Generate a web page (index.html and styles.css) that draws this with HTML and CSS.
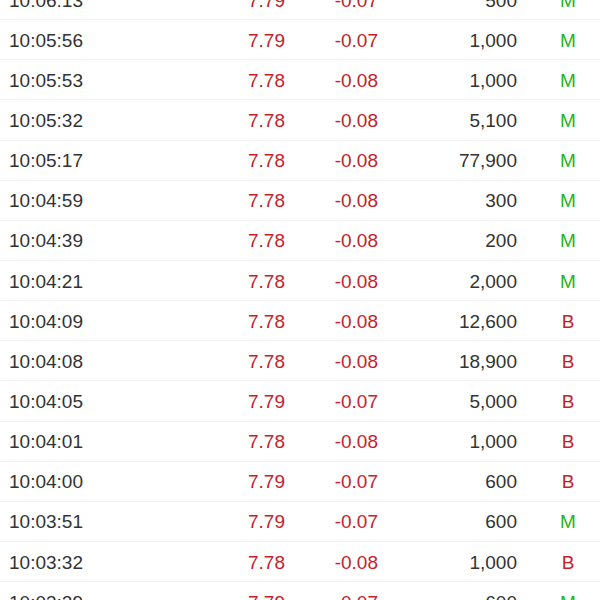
FILE: index.html
```html
<!DOCTYPE html>
<html lang="zh">
<head>
<meta charset="utf-8">
<link rel="stylesheet" href="styles.css">
</head>
<body>
<div class="list">
  <div class="row"><span class="time">10:06:13</span><span class="down">7.79</span><span class="down">-0.07</span><span class="vol">500</span><span class="flag m">M</span></div>
  <div class="row"><span class="time">10:05:56</span><span class="down">7.79</span><span class="down">-0.07</span><span class="vol">1,000</span><span class="flag m">M</span></div>
  <div class="row"><span class="time">10:05:53</span><span class="down">7.78</span><span class="down">-0.08</span><span class="vol">1,000</span><span class="flag m">M</span></div>
  <div class="row"><span class="time">10:05:32</span><span class="down">7.78</span><span class="down">-0.08</span><span class="vol">5,100</span><span class="flag m">M</span></div>
  <div class="row"><span class="time">10:05:17</span><span class="down">7.78</span><span class="down">-0.08</span><span class="vol">77,900</span><span class="flag m">M</span></div>
  <div class="row"><span class="time">10:04:59</span><span class="down">7.78</span><span class="down">-0.08</span><span class="vol">300</span><span class="flag m">M</span></div>
  <div class="row"><span class="time">10:04:39</span><span class="down">7.78</span><span class="down">-0.08</span><span class="vol">200</span><span class="flag m">M</span></div>
  <div class="row"><span class="time">10:04:21</span><span class="down">7.78</span><span class="down">-0.08</span><span class="vol">2,000</span><span class="flag m">M</span></div>
  <div class="row"><span class="time">10:04:09</span><span class="down">7.78</span><span class="down">-0.08</span><span class="vol">12,600</span><span class="flag b">B</span></div>
  <div class="row"><span class="time">10:04:08</span><span class="down">7.78</span><span class="down">-0.08</span><span class="vol">18,900</span><span class="flag b">B</span></div>
  <div class="row"><span class="time">10:04:05</span><span class="down">7.79</span><span class="down">-0.07</span><span class="vol">5,000</span><span class="flag b">B</span></div>
  <div class="row"><span class="time">10:04:01</span><span class="down">7.78</span><span class="down">-0.08</span><span class="vol">1,000</span><span class="flag b">B</span></div>
  <div class="row"><span class="time">10:04:00</span><span class="down">7.79</span><span class="down">-0.07</span><span class="vol">600</span><span class="flag b">B</span></div>
  <div class="row"><span class="time">10:03:51</span><span class="down">7.79</span><span class="down">-0.07</span><span class="vol">600</span><span class="flag m">M</span></div>
  <div class="row"><span class="time">10:03:32</span><span class="down">7.78</span><span class="down">-0.08</span><span class="vol">1,000</span><span class="flag b">B</span></div>
  <div class="row"><span class="time">10:03:29</span><span class="down">7.79</span><span class="down">-0.07</span><span class="vol">600</span><span class="flag m">M</span></div>
</div>
</body>
</html>
```

FILE: styles.css
```css
html, body {
  margin: 0;
  padding: 0;
  background: #ffffff;
  overflow: hidden;
}
body {
  font-family: "Liberation Sans", Arial, sans-serif;
  font-size: 19px;
  color: #333333;
}
.list {
  margin-top: -20px;
}
.row {
  display: grid;
  grid-template-columns: 200px 76px 93px 139px 82px;
  align-items: center;
  height: 40.15px;
  box-sizing: border-box;
  padding-left: 9px;
  padding-top: 2px;
  border-bottom: 1.5px solid #f1f1f1;
}
.row span {
  white-space: nowrap;
}
.time {
  text-align: left;
}
.down {
  color: #c62129;
  text-align: right;
}
.vol {
  text-align: right;
}
.flag {
  text-align: center;
  padding-left: 20px;
}
.flag.m {
  color: #1fb41f;
}
.flag.b {
  color: #c62129;
}
```
